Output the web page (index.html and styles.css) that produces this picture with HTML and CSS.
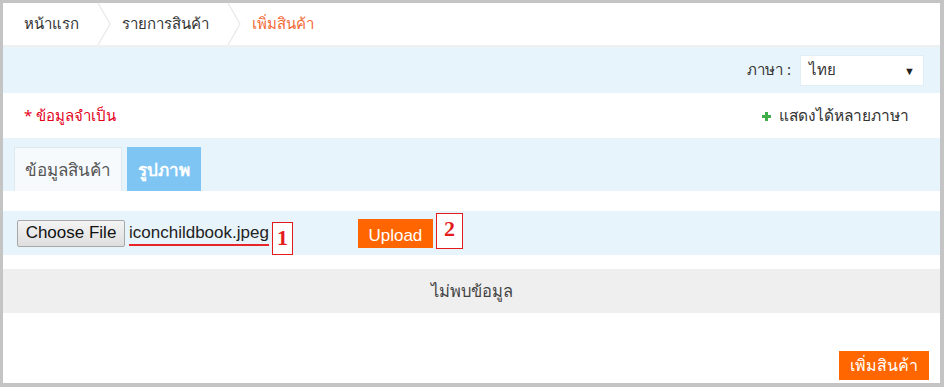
FILE: index.html
```html
<!DOCTYPE html>
<html lang="th">
<head>
  <meta charset="UTF-8">
  <title>เพิ่มสินค้า</title>
  <link rel="stylesheet" href="styles.css">
</head>
<body>
  <div class="frame">
    <div class="breadcrumb">
      <a class="crumb" href="#">หน้าแรก</a>
      <svg class="chev" width="14" height="42" viewBox="0 0 14 42"><polyline points="1,0 13,21 1,42" fill="none" stroke="#e8e8e8" stroke-width="1.2"/></svg>
      <a class="crumb" href="#">รายการสินค้า</a>
      <svg class="chev" width="14" height="42" viewBox="0 0 14 42"><polyline points="1,0 13,21 1,42" fill="none" stroke="#e8e8e8" stroke-width="1.2"/></svg>
      <span class="crumb current">เพิ่มสินค้า</span>
    </div>

    <div class="lang-bar">
      <label class="lang-label">ภาษา :</label>
      <div class="select">
        <span>ไทย</span>
        <span class="caret">&#9660;</span>
      </div>
    </div>

    <div class="info-row">
      <span class="required">* ข้อมูลจำเป็น</span>
      <span class="multi">
        <svg width="9" height="9" viewBox="0 0 9 9"><path d="M3 0h3v3h3v3H6v3H3V6H0V3h3z" fill="#3fae49"/></svg>
        แสดงได้หลายภาษา
      </span>
    </div>

    <div class="tabs">
      <div class="tab">ข้อมูลสินค้า</div>
      <div class="tab active">รูปภาพ</div>
    </div>

    <div class="upload-row">
      <button class="file-btn">Choose File</button>
      <span class="file-name">iconchildbook.jpeg</span>
      <span class="mark mark-1">1</span>
      <button class="upload-btn">Upload</button>
      <span class="mark mark-2">2</span>
    </div>

    <div class="empty">ไม่พบข้อมูล</div>

    <div class="actions">
      <button class="add-btn">เพิ่มสินค้า</button>
    </div>
  </div>
</body>
</html>
```

FILE: styles.css
```css
body {
  margin: 0;
  background-color: #c4c4c4;
  font-family: Tahoma, "Noto Sans", "Liberation Sans", sans-serif;
  font-size: 15px;
  color: #333;
}
.frame {
  margin: 3px 4px 4px 3px;
  height: 380px;
  background-color: white;
  display: flex;
  flex-direction: column;
}
.breadcrumb {
  height: 42px;
  display: flex;
  align-items: center;
  border-bottom: 2px solid #f0f0f0;
  padding-left: 21px;
}
.crumb {
  color: #333;
  text-decoration: none;
}
.crumb.current {
  color: #f26a35;
}
.chev {
  margin: 0 11px 0 18px;
}
.lang-bar {
  height: 46px;
  background-color: #e8f4fc;
  display: flex;
  align-items: center;
  justify-content: flex-end;
  padding-right: 16px;
}
.lang-label {
  margin-right: 9px;
}
.select {
  width: 106px;
  height: 29px;
  background-color: white;
  border: 1px solid #e2eef6;
  display: flex;
  align-items: center;
  justify-content: space-between;
  padding: 0 8px;
}
.caret {
  font-size: 11px;
  color: #222;
}
.info-row {
  height: 45px;
  display: flex;
  align-items: center;
  justify-content: space-between;
  padding: 0 31px 0 21px;
}
.required {
  color: #e3001b;
}
.multi {
  font-size: 15.5px;
}
.multi svg {
  margin-right: 4px;
}
.tabs {
  height: 44px;
  background-color: #e8f4fc;
  padding: 9px 0 0 11px;
  display: flex;
  gap: 5px;
}
.tab {
  padding: 0 10px;
  display: flex;
  align-items: center;
  font-size: 17px;
  color: #555;
  background-color: #f6fafd;
  border: 1px solid #dde8ef;
  border-bottom: none;
}
.tab.active {
  background-color: #7fc5f3;
  border-color: #7fc5f3;
  color: white;
  font-weight: bold;
}
.upload-row {
  margin-top: 20px;
  height: 44px;
  background-color: #e8f4fc;
  display: flex;
  align-items: center;
  padding-left: 14px;
  font-family: "Liberation Sans", Arial, sans-serif;
  font-size: 17px;
}
.file-btn {
  font-family: "Liberation Sans", Arial, sans-serif;
  font-size: 17px;
  height: 27px;
  width: 108px;
  padding: 0;
  background: linear-gradient(#f4f4f4, #dedede);
  border: 1px solid #a8a8a8;
  border-radius: 2px;
  color: #111;
}
.file-name {
  margin-left: 4px;
  color: #222;
  border-bottom: 2px solid #e8262a;
  padding-bottom: 1px;
  margin-top: 3px;
}
.mark {
  border: 1px solid #e31b1b;
  color: #e31b1b;
  font-family: "Liberation Serif", serif;
  font-weight: bold;
  font-size: 22px;
  display: flex;
  justify-content: center;
  background: white;
}
.mark-1 {
  width: 19px;
  height: 31px;
  margin: 10px 0 0 3px;
  align-items: center;
}
.mark-2 {
  width: 25px;
  height: 34px;
  margin: -5px 0 0 3px;
  align-items: flex-start;
  line-height: 30px;
}
.upload-btn {
  margin-left: 65px;
  height: 29px;
  width: 75px;
  padding: 5px 0 0;
  border: none;
  background-color: #ff6500;
  color: white;
  font-family: "Liberation Sans", Arial, sans-serif;
  font-size: 17px;
}
.empty {
  margin-top: 14px;
  height: 44px;
  background-color: #efefef;
  display: flex;
  align-items: center;
  justify-content: center;
  color: #444;
  font-size: 16.5px;
}
.actions {
  flex: 1;
  display: flex;
  justify-content: flex-end;
  align-items: flex-end;
  padding: 0 11px 3px 0;
}
.add-btn {
  height: 29px;
  width: 90px;
  padding: 0;
  border: none;
  background-color: #ff6600;
  color: white;
  font-family: Tahoma, "Noto Sans", "Liberation Sans", sans-serif;
  font-size: 16px;
}
```
